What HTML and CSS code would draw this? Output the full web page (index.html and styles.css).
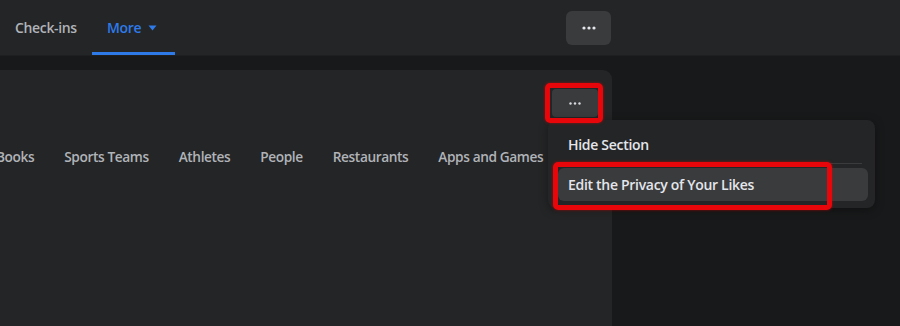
FILE: index.html
```html
<!DOCTYPE html>
<html>
<head>
<meta charset="utf-8">
<link rel="stylesheet" href="styles.css">
</head>
<body>
<header class="topbar">
  <nav class="toptabs">
    <a class="toptab first">Check-ins</a>
    <a class="toptab active">More <svg class="caret" width="9" height="6" viewBox="0 0 9 6"><path d="M0.5 0.5h8L4.5 5.5z" fill="#2d7ae8"/></svg></a>
  </nav>
  <button class="dotsbtn top"><svg width="14" height="4" viewBox="0 0 14 4"><circle cx="2" cy="2" r="1.6" fill="#e4e6eb"/><circle cx="7" cy="2" r="1.6" fill="#e4e6eb"/><circle cx="12" cy="2" r="1.6" fill="#e4e6eb"/></svg></button>
</header>
<main class="main">
  <section class="card">
    <div class="cardhead">
      <button class="dotsbtn inner"><svg width="12" height="3" viewBox="0 0 12 3"><circle cx="1.5" cy="1.5" r="1.2" fill="#d8dadf"/><circle cx="6" cy="1.5" r="1.2" fill="#d8dadf"/><circle cx="10.5" cy="1.5" r="1.2" fill="#d8dadf"/></svg></button>
    </div>
    <div class="tabs">
      <span class="tab books">Books</span>
      <span class="tab">Sports Teams</span>
      <span class="tab">Athletes</span>
      <span class="tab">People</span>
      <span class="tab">Restaurants</span>
      <span class="tab">Apps and Games</span>
    </div>
  </section>
  <div class="side"></div>
</main>
<div class="menu">
  <div class="menuitem">Hide Section</div>
  <div class="sep"></div>
  <div class="menuitem hover">Edit the Privacy of Your Likes</div>
</div>
<div class="mark mark-dots"></div>
<div class="mark mark-item"></div>
</body>
</html>
```
FILE: styles.css
```css
* { box-sizing: border-box; }
html, body { margin: 0; padding: 0; }
body {
  width: 900px;
  height: 326px;
  overflow: hidden;
  background: #18191a;
  font-family: "Open Sans", "Noto Sans", sans-serif;
  position: relative;
}
.topbar {
  height: 56px;
  background: #242526;
  display: flex;
  align-items: stretch;
  border-bottom: 1px solid #1e1f20;
}
.toptabs { display: flex; align-items: stretch; }
.toptab {
  display: flex;
  align-items: center;
  padding: 0 15px;
  font-size: 14px;
  font-weight: 600;
  color: #b0b3b8;
  letter-spacing: -0.35px;
  border-bottom: 3px solid transparent;
  padding-top: 3px;
}
.toptab.first { width: 92px; }
.toptab.active {
  color: #2d7ae8;
  border-bottom-color: #2d7ae8;
  width: 83px;
}
.caret { margin-left: 7px; }
.dotsbtn {
  border: none;
  padding: 0;
  display: flex;
  align-items: center;
  justify-content: center;
  background: #3a3b3c;
  border-radius: 6px;
}
.dotsbtn.top {
  width: 45px;
  height: 34px;
  margin: 11px 0 0 391px;
}
.main {
  display: flex;
  padding-top: 14px;
  height: 270px;
}
.card {
  width: 612px;
  background: #242526;
  border-top-right-radius: 9px;
  overflow: hidden;
}
.cardhead {
  display: flex;
  justify-content: flex-end;
  padding: 19px 14px 0 0;
  height: 76px;
}
.dotsbtn.inner {
  width: 46px;
  height: 28px;
  border-radius: 4px;
}
.tabs {
  display: flex;
  margin-left: -19px;
  white-space: nowrap;
}
.tab {
  padding: 0 15px;
  font-size: 13.7px;
  font-weight: 600;
  color: #b0b3b8;
  line-height: 22px;
  letter-spacing: -0.4px;
}
.side { flex: 1; }
.menu {
  position: absolute;
  left: 548px;
  top: 120px;
  width: 327px;
  height: 88px;
  background: #242526;
  border-radius: 8px;
  box-shadow: 0 2px 10px rgba(0,0,0,0.35);
  padding: 8px 7px 0 10px;
}
.menuitem {
  height: 32px;
  display: flex;
  align-items: center;
  padding-left: 10px;
  font-size: 14px;
  font-weight: 600;
  color: #e4e6eb;
  letter-spacing: -0.3px;
  border-radius: 6px;
}
.menuitem.hover { background: #3a3b3c; height: 33px; }
.sep {
  height: 1px;
  background: #3a3b3c;
  margin: 3px 6px 4px 0;
}
.mark {
  position: absolute;
  border: 5px solid #e8060a;
  border-radius: 5px;
  box-shadow: 0 0 3px rgba(230,0,0,0.6);
}
.mark-dots { left: 545px; top: 83px; width: 58px; height: 40px; }
.mark-item { left: 553px; top: 162px; width: 279px; height: 48px; }
```
